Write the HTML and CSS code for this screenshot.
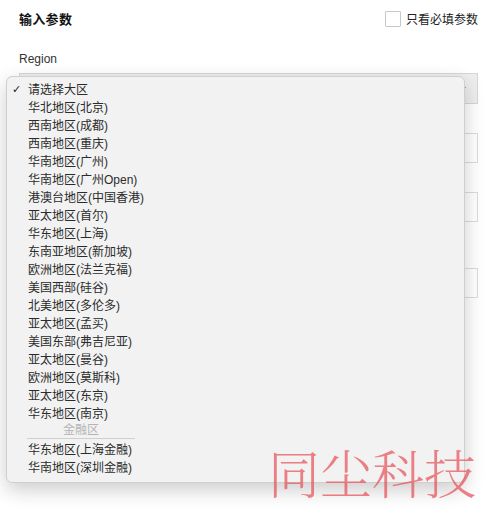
FILE: index.html
```html
<!DOCTYPE html>
<html lang="zh">
<head>
<meta charset="utf-8">
<link rel="stylesheet" href="styles.css">
</head>
<body>
<div class="panel">
  <div class="head">
    <h2 class="title">输入参数</h2>
    <label class="only-req"><span class="box"></span>只看必填参数</label>
  </div>
  <div class="field">
    <div class="label">Region</div>
    <div class="select"><span class="arrow"></span></div>
  </div>
  <div class="field f2"><div class="input"></div></div>
  <div class="field f3"><div class="input"></div></div>
  <div class="field f4"><div class="input"></div></div>

  <ul class="menu">
    <li class="opt sel">请选择大区</li>
    <li class="opt">华北地区(北京)</li>
    <li class="opt">西南地区(成都)</li>
    <li class="opt">西南地区(重庆)</li>
    <li class="opt">华南地区(广州)</li>
    <li class="opt">华南地区(广州Open)</li>
    <li class="opt">港澳台地区(中国香港)</li>
    <li class="opt">亚太地区(首尔)</li>
    <li class="opt">华东地区(上海)</li>
    <li class="opt">东南亚地区(新加坡)</li>
    <li class="opt">欧洲地区(法兰克福)</li>
    <li class="opt">美国西部(硅谷)</li>
    <li class="opt">北美地区(多伦多)</li>
    <li class="opt">亚太地区(孟买)</li>
    <li class="opt">美国东部(弗吉尼亚)</li>
    <li class="opt">亚太地区(曼谷)</li>
    <li class="opt">欧洲地区(莫斯科)</li>
    <li class="opt">亚太地区(东京)</li>
    <li class="opt">华东地区(南京)</li>
    <li class="group"><span>金融区</span></li>
    <li class="opt">华东地区(上海金融)</li>
    <li class="opt">华南地区(深圳金融)</li>
  </ul>
  <div class="watermark">同尘科技</div>
</div>
</body>
</html>
```

FILE: styles.css
```css
html, body { margin: 0; padding: 0; background: #fff; }
body {
  font-family: "Liberation Sans", "Noto Sans CJK SC", sans-serif;
  color: #333;
  width: 494px;
  height: 514px;
  overflow: hidden;
}
.panel { position: relative; padding: 10px 16px 0 19px; height: 504px; }
.head {
  display: flex;
  justify-content: space-between;
  align-items: center;
  height: 17px;
}
.title {
  margin: 0;
  font-size: 13px;
  font-weight: bold;
  color: #111;
  letter-spacing: 0.3px;
}
.only-req {
  display: flex;
  align-items: center;
  font-size: 12px;
  color: #222;
}
.box {
  width: 14px;
  height: 14px;
  border: 1px solid #c8c8c8;
  background: #fff;
  margin-right: 5px;
  border-radius: 1px;
}
.field { margin-top: 25px; }
.label { font-size: 12px; color: #333; line-height: 14px; }
.select {
  margin-top: 7px;
  height: 29px;
  border: 1px solid #d6d6d6;
  background: #eeeeee;
  position: relative;
}
.arrow {
  position: absolute;
  right: 11px;
  top: 13px;
  border-left: 3px solid transparent;
  border-right: 3px solid transparent;
  border-top: 4px solid #666;
}
.f2 { margin-top: 29px; }
.f3 { margin-top: 29px; }
.f4 { margin-top: 46px; }
.input {
  height: 28px;
  border: 1px solid #dcdcdc;
  background: #fff;
}
.menu {
  position: absolute;
  left: 6px;
  top: 76px;
  width: 457px;
  margin: 0;
  padding: 4px 0 5px;
  list-style: none;
  background: #f2f2f2;
  border: 1px solid #cfcfcf;
  border-radius: 6px;
  box-shadow: 0 7px 20px rgba(0, 0, 0, 0.2);
  font-family: "Liberation Sans", "Noto Sans CJK SC", sans-serif;
}
.opt {
  height: 18px;
  line-height: 18px;
  font-size: 12px;
  padding-left: 21px;
  color: #2b2b2b;
  position: relative;
}
.sel::before {
  content: "✓";
  position: absolute;
  left: 5px;
  top: 0;
  font-size: 11px;
  color: #222;
  font-family: "DejaVu Sans", sans-serif;
}
.group {
  height: 18px;
  padding-left: 20px;
}
.group span {
  display: block;
  width: 108px;
  text-align: center;
  font-size: 12px;
  line-height: 15px;
  color: #b4b4b4;
  border-bottom: 1px solid #cfcfcf;
}
.watermark {
  position: absolute;
  left: 268px;
  top: 440px;
  font-family: "Noto Serif CJK SC", "Noto Sans CJK SC", serif;
  font-weight: 300;
  font-size: 52px;
  line-height: 64px;
  color: rgba(232, 80, 86, 0.72);
  white-space: nowrap;
}
```
